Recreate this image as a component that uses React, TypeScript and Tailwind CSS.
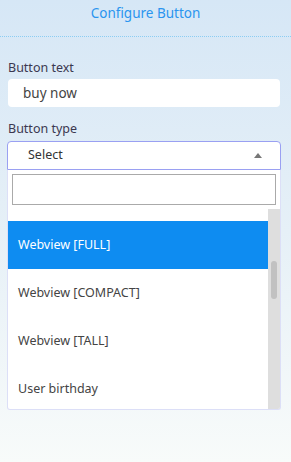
const options = [
  { label: "Webview [FULL]", active: true },
  { label: "Webview [COMPACT]", active: false },
  { label: "Webview [TALL]", active: false },
  { label: "User birthday", active: false },
];

export default function App() {
  return (
    <div
      className="w-[291px] h-[462px] overflow-hidden bg-linear-to-b from-[#d6e7f6] via-[#e6f0f7] to-[#f8fbfa] text-[#3d3b4a]"
      style={{ fontFamily: '"Noto Sans", "Open Sans", sans-serif' }}
    >
      {/* Header */}
      <div className="h-[37px] flex justify-center pt-[3px] border-b border-dotted border-[#8ccdf3]">
        <span className="text-[13.5px] text-[#2a95ef]">Configure Button</span>
      </div>

      <div className="px-[7px] pt-[23px]">
        {/* Button text */}
        <label className="block pl-[1px] text-[12.5px] leading-[16px] text-[#3b3850]">Button text</label>
        <div className="mt-[3px] ml-[1px] h-[28px] w-[272px] rounded-[4px] bg-white pl-[15px] flex items-center text-[13.5px] text-[#444]">
          buy now
        </div>

        {/* Button type */}
        <label className="block mt-[14px] pl-[1px] text-[12.5px] leading-[16px] text-[#3b3850]">Button type</label>
        <div className="mt-[4px] w-[274px]">
          <div className="h-[29px] rounded-t-[4px] border border-[#9aa0f2] bg-white flex items-center justify-between pl-[20px] pr-[18px]">
            <span className="text-[12.5px] text-[#333]">Select</span>
            <span className="w-0 h-0 border-x-[4px] border-x-transparent border-b-[5px] border-b-[#777]" />
          </div>

          <div className="h-[240px] border-x border-b border-[#dcdff7] rounded-b-[3px] bg-white flex flex-col overflow-hidden">
            <div className="px-[4px] pt-[4px] pb-[4px]">
              <div className="h-[31px] border border-[#aaa] bg-white" />
            </div>
            <div className="flex flex-1 overflow-hidden">
              <div className="flex-1 overflow-hidden">
                <div className="h-[12px]" />
                {options.map((o) => (
                  <div
                    key={o.label}
                    className={
                      o.active
                        ? "h-[48px] flex items-center pl-[10px] text-[12.5px] bg-[#0e8cf1] text-white"
                        : "h-[48px] flex items-center pl-[10px] text-[12.5px] text-[#444]"
                    }
                  >
                    {o.label}
                  </div>
                ))}
              </div>
              <div className="w-[12px] bg-[#dedede] pt-[52px] flex justify-center">
                <div className="w-[6px] h-[38px] rounded-[3px] bg-[#c1c1c1]" />
              </div>
            </div>
          </div>
        </div>
      </div>
    </div>
  );
}
